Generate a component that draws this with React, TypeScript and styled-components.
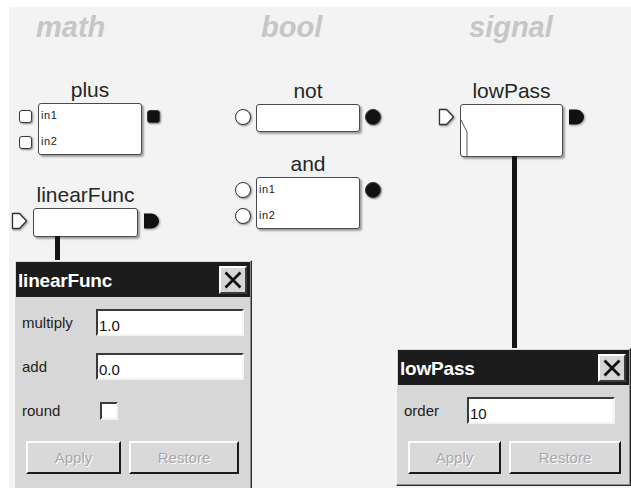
import React from "react";
import styled, { createGlobalStyle } from "styled-components";

// canvas offset inside the page (white strip on top and left)
const OX = 9;
const OY = 7;
const SLOT = 26;
const PORT_GAP = 5;

type PortKind = "square" | "round" | "arrow";

const portWidth: Record<PortKind, number> = {
    square: 14,
    round: 16,
    arrow: 17,
};

const GlobalStyle = createGlobalStyle`
    html, body {
        margin: 0;
        padding: 0;
        background: #ffffff;
    }
    body {
        font-family: "Liberation Sans", Arial, sans-serif;
        color: #1a1a1a;
    }
`

const Canvas = styled.div`
    position: relative;
    margin: ${OY}px 0 0 ${OX}px;
    width: ${631 - OX}px;
    height: ${488 - OY}px;
    background: #f3f3f3;
    overflow: hidden;
`

const Palette = styled.div`
    display: grid;
    grid-template-columns: 225px 208px auto;
    padding: 6px 0 0 27px;
`

const Category = styled.div`
    font: italic bold 29px/29px "Liberation Sans", Arial, sans-serif;
    color: #c6c6c6;
`

const NodeWrap = styled.div<{ $x: number; $y: number }>`
    position: absolute;
    left: ${p => p.$x - OX}px;
    top: ${p => p.$y - OY}px;
    display: flex;
    flex-direction: column;
    align-items: center;
`

const NodeLabel = styled.div`
    font-size: 21px;
    line-height: 22px;
    height: 22px;
    margin-bottom: 2px;
    white-space: nowrap;
    color: #262626;
`

const NodeRow = styled.div`
    display: flex;
    align-items: flex-start;
    gap: ${PORT_GAP}px;
`

const PortCol = styled.div<{ $w: number }>`
    width: ${p => p.$w}px;
    display: flex;
    flex-direction: column;
`

const Slot = styled.div`
    height: ${SLOT}px;
    display: flex;
    align-items: center;
`

const Box = styled.div<{ $w: number; $h: number }>`
    position: relative;
    box-sizing: border-box;
    width: ${p => p.$w}px;
    height: ${p => p.$h}px;
    background: #ffffff;
    border: 1px solid #4a4a4a;
    border-radius: 3px;
    box-shadow: 2px 2px 2px rgba(0, 0, 0, 0.35);
`

const InName = styled.div`
    height: ${SLOT}px;
    line-height: ${SLOT - 3}px;
    padding-left: 2px;
    font-size: 11px;
    letter-spacing: 0.6px;
    color: #222;
`

const SquarePort = styled.div<{ $out?: boolean }>`
    box-sizing: border-box;
    width: 13px;
    height: 13px;
    border: 1.5px solid #3a3a3a;
    border-radius: 3px;
    background: ${p => (p.$out ? "#111" : "#fff")};
    box-shadow: 1px 1px 2px rgba(0, 0, 0, 0.45);
`

const RoundPort = styled.div<{ $out?: boolean }>`
    box-sizing: border-box;
    width: 16px;
    height: 16px;
    border: 1px solid #333;
    border-radius: 50%;
    background: ${p => (p.$out ? "#111" : "#fff")};
    box-shadow: 1px 1px 2px rgba(0, 0, 0, 0.45);
`

const ArrowSvg = styled.svg`
    display: block;
    filter: drop-shadow(1px 1px 1px rgba(0, 0, 0, 0.4));
`

const Fold = styled.svg`
    position: absolute;
    left: -1px;
    top: -1px;
`

const Wire = styled.div<{ $x: number; $y: number; $h: number }>`
    position: absolute;
    left: ${p => p.$x - OX}px;
    top: ${p => p.$y - OY}px;
    width: 5px;
    height: ${p => p.$h}px;
    background: #151515;
`

const Dialog = styled.div<{ $x: number; $y: number; $w: number; $h: number }>`
    position: absolute;
    left: ${p => p.$x - OX}px;
    top: ${p => p.$y - OY}px;
    width: ${p => p.$w}px;
    height: ${p => p.$h}px;
    box-sizing: border-box;
    padding: 1px;
    background: #d7d7d7;
    border: 1px solid;
    border-color: #f6f6f6 #2a2a2a #2a2a2a #f6f6f6;
    box-shadow: inset -1px -1px 0 #8c8c8c;
    display: flex;
    flex-direction: column;
`

const TitleBar = styled.div`
    height: 35px;
    flex: none;
    background: #1c1c1c;
    display: flex;
    align-items: center;
    justify-content: space-between;
    padding: 0 3px 0 2px;
`

const Title = styled.span`
    color: #ffffff;
    font-size: 19px;
    font-weight: bold;
    letter-spacing: -0.2px;
    padding-top: 2px;
`

const CloseButton = styled.button`
    box-sizing: border-box;
    width: 28px;
    height: 28px;
    padding: 0;
    background: #d6d6d6;
    border: 2px solid;
    border-color: #ffffff #3c3c3c #3c3c3c #ffffff;
    display: flex;
    align-items: center;
    justify-content: center;
`

const Form = styled.div<{ $labelW: number }>`
    display: grid;
    grid-template-columns: ${p => p.$labelW}px 148px;
    grid-auto-rows: 27px;
    row-gap: 17px;
    align-items: center;
    padding: 12px 0 0 6px;
`

const FieldLabel = styled.label`
    font-size: 15px;
    color: #1e1e1e;
`

const TextField = styled.input`
    box-sizing: border-box;
    width: 148px;
    height: 27px;
    margin: 0;
    padding: 5px 0 0 1px;
    background: #ffffff;
    border: 2px solid;
    border-color: #3a3a3a #f4f4f4 #f4f4f4 #3a3a3a;
    font: 15px "Liberation Sans", Arial, sans-serif;
    color: #111;
    outline: none;
`

const CheckBox = styled.span`
    box-sizing: border-box;
    display: block;
    width: 18px;
    height: 18px;
    margin-left: 4px;
    background: #ffffff;
    border: 2px solid;
    border-color: #3a3a3a #f2f2f2 #f2f2f2 #3a3a3a;
`

const ButtonRow = styled.div`
    display: flex;
    gap: 8px;
    padding: 17px 0 0 10px;
`

const DialogButton = styled.button<{ $w: number }>`
    box-sizing: border-box;
    width: ${p => p.$w}px;
    height: 33px;
    padding: 0;
    background: #d9d9d9;
    border: 2px solid;
    border-color: #fbfbfb #1a1a1a #1a1a1a #fbfbfb;
    font: 15px "Liberation Sans", Arial, sans-serif;
    color: #a8a8a8;
    text-shadow: 1px 1px 0 #ffffff;
`

const Port = ({ kind, out }: { kind: PortKind; out?: boolean }): JSX.Element => {
    if (kind === "square") return <SquarePort $out={out} />;
    if (kind === "round") return <RoundPort $out={out} />;
    return (
        <ArrowSvg width="17" height="18" viewBox="0 0 17 18">
            {out ? (
                <path d="M1 1.5 H8 C13 1.5 16 6 16 9 C16 12 13 16.5 8 16.5 H1 Z" fill="#111" />
            ) : (
                <path
                    d="M1.5 1.5 H8.5 L15.5 9 L8.5 16.5 H1.5 Z"
                    fill="#fff"
                    stroke="#333"
                    strokeWidth="1.3"
                    strokeLinejoin="round"
                />
            )}
        </ArrowSvg>
    );
};

interface NodeProps {
    label: string;
    kind: PortKind;
    x: number;
    y: number;
    w: number;
    h: number;
    inputs: string[];
    fold?: boolean;
}

const Node = ({ label, kind, x, y, w, h, inputs, fold }: NodeProps): JSX.Element => {
    const pw = portWidth[kind];
    return (
        <NodeWrap $x={x - pw - PORT_GAP} $y={y - 24}>
            <NodeLabel>{label}</NodeLabel>
            <NodeRow>
                <PortCol $w={pw}>
                    {inputs.map((_, i) => (
                        <Slot key={i}>
                            <Port kind={kind} />
                        </Slot>
                    ))}
                </PortCol>
                <Box $w={w} $h={h}>
                    {inputs.map((name, i) => (
                        <InName key={i}>{name}</InName>
                    ))}
                    {fold && (
                        <Fold width="10" height={h} viewBox={`0 0 10 ${h}`}>
                            <path d={`M1 16 L7 28 L7 ${h}`} fill="none" stroke="#555" strokeWidth="1" />
                        </Fold>
                    )}
                </Box>
                <PortCol $w={pw}>
                    <Slot>
                        <Port kind={kind} out />
                    </Slot>
                </PortCol>
            </NodeRow>
        </NodeWrap>
    );
};

const CloseIcon = (): JSX.Element => (
    <svg width="18" height="18" viewBox="0 0 18 18">
        <path d="M2.5 2.5 L15.5 15.5 M15.5 2.5 L2.5 15.5" stroke="#111" strokeWidth="2.8" strokeLinecap="square" />
    </svg>
);

const nodes: NodeProps[] = [
    { label: "plus", kind: "square", x: 38, y: 103, w: 104, h: 52, inputs: ["in1", "in2"] },
    { label: "linearFunc", kind: "arrow", x: 33, y: 208, w: 105, h: 29, inputs: [""] },
    { label: "not", kind: "round", x: 256, y: 104, w: 104, h: 28, inputs: [""] },
    { label: "and", kind: "round", x: 256, y: 177, w: 104, h: 52, inputs: ["in1", "in2"] },
    { label: "lowPass", kind: "arrow", x: 460, y: 104, w: 103, h: 53, inputs: [""], fold: true },
];

const App = (): JSX.Element => {
    return (
        <>
            <GlobalStyle />
            <Canvas>
                <Palette>
                    <Category>math</Category>
                    <Category>bool</Category>
                    <Category>signal</Category>
                </Palette>

                {nodes.map(n => (
                    <Node key={n.label} {...n} />
                ))}

                <Wire $x={55} $y={236} $h={26} />
                <Wire $x={512} $y={156} $h={194} />

                <Dialog $x={14} $y={260} $w={238} $h={240}>
                    <TitleBar>
                        <Title>linearFunc</Title>
                        <CloseButton>
                            <CloseIcon />
                        </CloseButton>
                    </TitleBar>
                    <Form $labelW={74}>
                        <FieldLabel>multiply</FieldLabel>
                        <TextField defaultValue="1.0" />
                        <FieldLabel>add</FieldLabel>
                        <TextField defaultValue="0.0" />
                        <FieldLabel>round</FieldLabel>
                        <CheckBox />
                    </Form>
                    <ButtonRow>
                        <DialogButton $w={95}>Apply</DialogButton>
                        <DialogButton $w={110}>Restore</DialogButton>
                    </ButtonRow>
                </Dialog>

                <Dialog $x={396} $y={348} $w={235} $h={138}>
                    <TitleBar>
                        <Title>lowPass</Title>
                        <CloseButton>
                            <CloseIcon />
                        </CloseButton>
                    </TitleBar>
                    <Form $labelW={63}>
                        <FieldLabel>order</FieldLabel>
                        <TextField defaultValue="10" />
                    </Form>
                    <ButtonRow>
                        <DialogButton $w={93}>Apply</DialogButton>
                        <DialogButton $w={112}>Restore</DialogButton>
                    </ButtonRow>
                </Dialog>
            </Canvas>
        </>
    );
};

export default App;
